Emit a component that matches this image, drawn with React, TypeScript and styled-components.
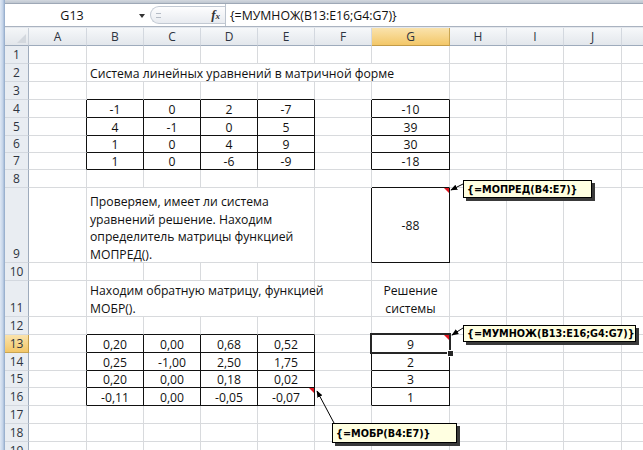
import React from 'react';
import styled, { createGlobalStyle } from 'styled-components';

const COLS = ['A', 'B', 'C', 'D', 'E', 'F', 'G', 'H', 'I', 'J', 'K'];
const COL_W = [58, 57, 57, 57, 57, 57, 78, 57, 57, 58, 60];
const ROW_H = [18, 18, 18, 18, 18, 17, 17, 18, 75, 18, 36, 18, 18, 18, 17, 18, 18, 18, 18];

const ACTIVE_COL = 6; // G
const ACTIVE_ROW = 13;

type Range = { r1: number; r2: number; c1: number; c2: number };

// ranges drawn with a thin black border
const boxes: Range[] = [
  { r1: 4, r2: 7, c1: 1, c2: 4 },
  { r1: 4, r2: 7, c1: 6, c2: 6 },
  { r1: 9, r2: 9, c1: 6, c2: 6 },
  { r1: 13, r2: 16, c1: 1, c2: 4 },
  { r1: 13, r2: 16, c1: 6, c2: 6 },
];

const inBox = (r: number, c: number) =>
  boxes.some(b => r >= b.r1 && r <= b.r2 && c >= b.c1 && c <= b.c2);

type CellDef = {
  text: string;
  span?: number;
  align?: 'left' | 'center';
  middle?: boolean;
  note?: boolean;
};

const at = (r: number, c: number) => `${COLS[c]}${r}`;
const cells: Record<string, CellDef> = {};

const matrix = [
  [-1, 0, 2, -7],
  [4, -1, 0, 5],
  [1, 0, 4, 9],
  [1, 0, -6, -9],
];
const free = [-10, 39, 30, -18];
const inverse = [
  ['0,20', '0,00', '0,68', '0,52'],
  ['0,25', '-1,00', '2,50', '1,75'],
  ['0,20', '0,00', '0,18', '0,02'],
  ['-0,11', '0,00', '-0,05', '-0,07'],
];
const roots = [9, 2, 3, 1];

matrix.forEach((row, i) =>
  row.forEach((v, j) => {
    cells[at(4 + i, 1 + j)] = { text: String(v), align: 'center' };
  })
);
free.forEach((v, i) => {
  cells[at(4 + i, 6)] = { text: String(v), align: 'center' };
});
inverse.forEach((row, i) =>
  row.forEach((v, j) => {
    cells[at(13 + i, 1 + j)] = { text: v, align: 'center' };
  })
);
roots.forEach((v, i) => {
  cells[at(13 + i, 6)] = { text: String(v), align: 'center' };
});

cells.B2 = { text: 'Система линейных уравнений в матричной форме', span: 6 };
cells.B9 = {
  text: 'Проверяем, имеет ли система\nуравнений решение. Находим\nопределитель матрицы функцией\nМОПРЕД().',
  span: 4,
};
cells.G9 = { text: '-88', align: 'center', middle: true, note: true };
cells.B11 = { text: 'Находим обратную матрицу, функцией\nМОБР().', span: 4 };
cells.G11 = { text: 'Решение\nсистемы', align: 'center' };
cells.E16.note = true;
cells.G13.note = true;

// comment boxes, in sheet coordinates
const notes = [
  { text: '{=МОПРЕД(B4:E7)}', x: 458, y: 152, w: 129, h: 18, from: [458, 156], to: [446, 162] },
  { text: '{=МУМНОЖ(B13:E16;G4:G7)}', x: 458, y: 297, w: 173, h: 17, from: [458, 300], to: [447, 307] },
  { text: '{=МОБР(B4:E7)}', x: 327, y: 395, w: 125, h: 20, from: [329, 395], to: [312, 363] },
];

const GlobalStyle = createGlobalStyle`
  html, body {
    margin: 0;
    padding: 0;
    background: #fff;
    overflow: hidden;
  }
`;

const Window = styled.div`
  display: flex;
  width: 643px;
  height: 450px;
  overflow: hidden;
  font-family: "Open Sans", "Noto Sans", sans-serif;
  color: #111;
`;

const LeftEdge = styled.div`
  flex: none;
  width: 5px;
  background: linear-gradient(to right, #dfe8f4 0%, #c4d4e9 55%, #8fa7c7 100%);
`;

const Main = styled.div`
  flex: 1;
  min-width: 0;
  display: flex;
  flex-direction: column;
`;

const FormulaBar = styled.div`
  flex: none;
  height: 28px;
  display: flex;
  flex-direction: column;
  background: #e4e8ee;
`;

const TopStrip = styled.div`
  height: 3px;
  background: linear-gradient(#d3d8df, #bec6d0);
  border-bottom: 1px solid #9ea8b6;
`;

const BarRow = styled.div`
  height: 22px;
  display: flex;
  background: #fff;
  border-bottom: 1px solid #aab3c0;
`;

const NameBox = styled.div`
  flex: none;
  width: 145px;
  display: flex;
  align-items: center;
  font-size: 12.5px;
`;

const NameText = styled.span`
  flex: 1;
  text-align: center;
`;

const DropArrow = styled.span`
  width: 0;
  height: 0;
  margin: 1px 5px 0 0;
  border-left: 3.5px solid transparent;
  border-right: 3.5px solid transparent;
  border-top: 4px solid #333;
`;

const FxArea = styled.div`
  flex: none;
  width: 74px;
  align-self: center;
  height: 16px;
  display: flex;
  align-items: center;
  border: 1px solid #c2c9d3;
  border-right: none;
  border-radius: 9px 0 0 9px;
  background: linear-gradient(#fdfdfe, #e8ebf0);
`;

const Grip = styled.span`
  width: 5px;
  height: 3px;
  margin-left: 5px;
  border-top: 1px solid #b5bcc6;
  border-bottom: 1px solid #b5bcc6;
`;

const FxLabel = styled.span`
  margin-left: auto;
  margin-right: 5px;
  font-family: "Liberation Serif", serif;
  font-style: italic;
  font-weight: bold;
  font-size: 13px;
  color: #333;

  sub {
    font-size: 9px;
    vertical-align: baseline;
  }
`;

const FormulaInput = styled.div`
  flex: 1;
  display: flex;
  align-items: center;
  padding-left: 4px;
  border-left: 1px solid #bcc4ce;
  font-size: 12.3px;
  white-space: nowrap;
`;

const Sheet = styled.div`
  position: relative;
  flex: 1;
  display: grid;
  grid-template-columns: 24px ${COL_W.map(w => `${w}px`).join(' ')};
  grid-template-rows: 18px ${ROW_H.map(h => `${h}px`).join(' ')};
  overflow: hidden;
`;

const Corner = styled.div`
  grid-row: 1;
  grid-column: 1;
  position: relative;
  background: linear-gradient(#f4f6f8, #e2e6eb);
  border-right: 1px solid #c9d0d9;
  border-bottom: 1px solid #9eabbc;

  &::after {
    content: '';
    position: absolute;
    right: 2px;
    bottom: 2px;
    border-left: 9px solid transparent;
    border-bottom: 9px solid #d3d8de;
  }
`;

const ColHead = styled.div<{ $col: number; $active: boolean }>`
  grid-row: 1;
  grid-column: ${p => p.$col};
  display: flex;
  align-items: center;
  justify-content: center;
  font-size: 12px;
  color: #2d3440;
  background: ${p =>
    p.$active ? 'linear-gradient(#fae3ad, #f3c768)' : 'linear-gradient(#f6f8fa, #e3e7ec)'};
  border-right: 1px solid ${p => (p.$active ? '#c9a552' : '#d3d8df')};
  border-bottom: 1px solid ${p => (p.$active ? '#c29b48' : '#9eabbc')};
`;

const RowHead = styled.div<{ $row: number; $active: boolean }>`
  grid-row: ${p => p.$row};
  grid-column: 1;
  display: flex;
  align-items: flex-end;
  justify-content: center;
  font-size: 12px;
  line-height: 17px;
  color: #2d3440;
  background: ${p => (p.$active ? 'linear-gradient(#fae3ad, #f3c768)' : '#e9edf2')};
  border-right: 1px solid ${p => (p.$active ? '#c29b48' : '#9eabbc')};
  border-bottom: 1px solid ${p => (p.$active ? '#c9a552' : '#d3d8df')};
`;

const Cell = styled.div<{
  $row: number;
  $col: number;
  $span: number;
  $right: boolean;
  $bottom: boolean;
  $center: boolean;
  $middle: boolean;
}>`
  grid-row: ${p => p.$row};
  grid-column: ${p => p.$col} / span ${p => p.$span};
  position: relative;
  min-width: 0;
  display: flex;
  align-items: ${p => (p.$middle ? 'center' : 'flex-end')};
  justify-content: ${p => (p.$center ? 'center' : 'flex-start')};
  padding: 0 3px;
  border-right: 1px solid ${p => (p.$right ? '#111' : '#d8dadd')};
  border-bottom: 1px solid ${p => (p.$bottom ? '#111' : '#d8dadd')};
  font-size: 12.2px;
  line-height: 17.5px;
  text-align: ${p => (p.$center ? 'center' : 'left')};
  white-space: pre;
`;

const CellText = styled.span`
  margin-bottom: -1px;
`;

const NoteMark = styled.span`
  position: absolute;
  top: 0;
  right: 0;
  width: 0;
  height: 0;
  border-top: 5px solid #e0141e;
  border-left: 5px solid transparent;
`;

const Selection = styled.div<{ $row: number; $col: number }>`
  grid-row: ${p => p.$row};
  grid-column: ${p => p.$col};
  position: relative;
  z-index: 2;
  margin: -2px -1px -1px -2px;
  border: 2px solid #262626;
  pointer-events: none;

  &::after {
    content: '';
    position: absolute;
    right: -5px;
    bottom: -5px;
    width: 5px;
    height: 5px;
    background: #262626;
    border: 1px solid #fff;
  }
`;

const Arrows = styled.svg`
  position: absolute;
  left: 0;
  top: 0;
  width: 638px;
  height: 422px;
  z-index: 3;
  pointer-events: none;
`;

const Note = styled.div<{ $x: number; $y: number; $w: number; $h: number }>`
  position: absolute;
  left: ${p => p.$x}px;
  top: ${p => p.$y}px;
  z-index: 4;
  box-sizing: border-box;
  width: ${p => p.$w}px;
  height: ${p => p.$h}px;
  display: flex;
  align-items: center;
  padding: 0 2px 0 3px;
  background: #ffffe1;
  border: 1px solid #000;
  box-shadow: 3px 3px 0 #3a3a3a;
  font-family: "DejaVu Sans", Verdana, sans-serif;
  font-weight: bold;
  font-size: 9.7px;
  color: #000;
  white-space: nowrap;
`;

function renderCells() {
  const out: React.ReactNode[] = [];
  for (let r = 1; r <= ROW_H.length; r++) {
    out.push(
      <RowHead key={`h${r}`} $row={r + 1} $active={r === ACTIVE_ROW}>
        {r}
      </RowHead>
    );
    let c = 0;
    while (c < COLS.length) {
      const def = cells[at(r, c)];
      const span = def?.span ?? 1;
      const last = c + span - 1;
      let bottom = false;
      for (let k = c; k <= last; k++) bottom = bottom || inBox(r, k) || inBox(r + 1, k);
      out.push(
        <Cell
          key={at(r, c)}
          $row={r + 1}
          $col={c + 2}
          $span={span}
          $right={inBox(r, last) || inBox(r, last + 1)}
          $bottom={bottom}
          $center={def?.align === 'center'}
          $middle={!!def?.middle}
        >
          {def && <CellText>{def.text}</CellText>}
          {def?.note && <NoteMark />}
        </Cell>
      );
      c += span;
    }
  }
  return out;
}

export default function App() {
  return (
    <Window>
      <GlobalStyle />
      <LeftEdge />
      <Main>
        <FormulaBar>
          <TopStrip />
          <BarRow>
            <NameBox>
              <NameText>G13</NameText>
              <DropArrow />
            </NameBox>
            <FxArea>
              <Grip />
              <FxLabel>
                f<sub>x</sub>
              </FxLabel>
            </FxArea>
            <FormulaInput>{'{=МУМНОЖ(B13:E16;G4:G7)}'}</FormulaInput>
          </BarRow>
        </FormulaBar>
        <Sheet>
          <Corner />
          {COLS.map((name, i) => (
            <ColHead key={name} $col={i + 2} $active={i === ACTIVE_COL}>
              {/* the K header is scrolled past the window edge */}
              {name === 'K' ? '' : name}
            </ColHead>
          ))}
          {renderCells()}
          <Selection $row={ACTIVE_ROW + 1} $col={ACTIVE_COL + 2} />
          <Arrows viewBox="0 0 638 422">
            <defs>
              <marker
                id="head"
                viewBox="0 0 10 10"
                refX="9"
                refY="5"
                markerWidth="7"
                markerHeight="7"
                orient="auto"
              >
                <path d="M0,1 L10,5 L0,9 z" fill="#000" />
              </marker>
            </defs>
            {notes.map(n => (
              <line
                key={n.text}
                x1={n.from[0]}
                y1={n.from[1]}
                x2={n.to[0]}
                y2={n.to[1]}
                stroke="#000"
                strokeWidth="1"
                markerEnd="url(#head)"
              />
            ))}
          </Arrows>
          {notes.map(n => (
            <Note key={n.text} $x={n.x} $y={n.y} $w={n.w} $h={n.h}>
              {n.text}
            </Note>
          ))}
        </Sheet>
      </Main>
    </Window>
  );
}
